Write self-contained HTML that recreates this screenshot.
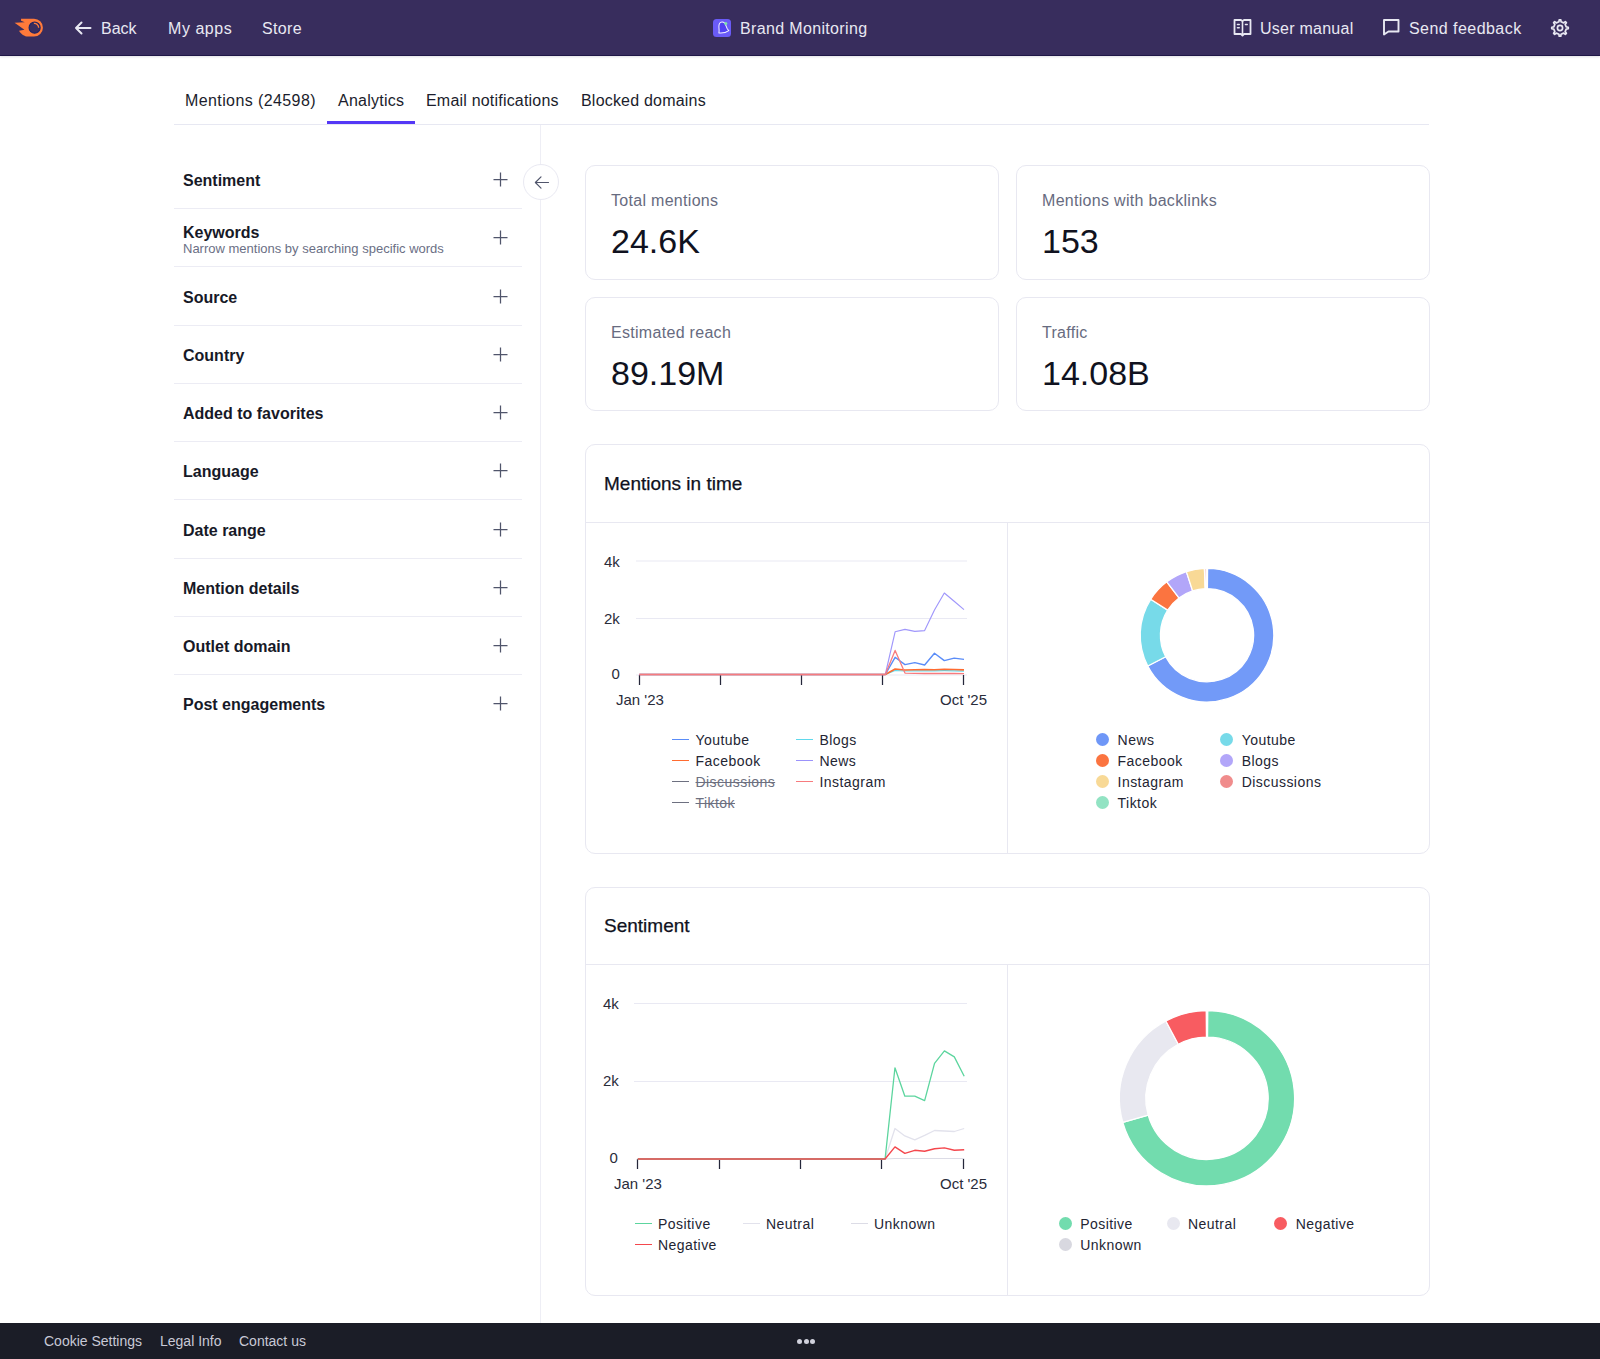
<!DOCTYPE html>
<html><head><meta charset="utf-8">
<style>
*{box-sizing:border-box;margin:0;padding:0}
html,body{width:1600px;height:1359px;overflow:hidden;background:#fff;font-family:"Liberation Sans",sans-serif;color:#171927}
.abs{position:absolute}
#hdr{position:absolute;left:0;top:0;width:1600px;height:56px;background:#382d5d;border-bottom:1px solid #1f1747;box-shadow:0 1px 2px rgba(40,40,70,0.14)}
.ht{position:absolute;top:19px;font-size:16px;line-height:19px;color:#e8e8f2;white-space:nowrap}
.tab{position:absolute;top:91px;font-size:16px;line-height:19px;color:#1b1d2c;white-space:nowrap}
.fi{position:absolute;left:174px;width:348px;height:58px;border-bottom:1px solid #ececf4}
.fi .t{position:absolute;left:9px;font-size:16px;font-weight:700;line-height:19px;color:#171927;white-space:nowrap}
.fi .s{position:absolute;left:9px;top:32px;font-size:13px;line-height:15px;color:#6b6f85;white-space:nowrap}
.plus{position:absolute;left:319px;top:21px;width:15px;height:15px}
.card{position:absolute;border:1px solid #e8e8f1;border-radius:10px;background:#fff}
.ml{position:absolute;left:25px;top:25px;font-size:16px;line-height:19px;color:#676b80;white-space:nowrap;letter-spacing:0.3px}
.mv{position:absolute;left:25px;top:56px;font-size:34px;line-height:38px;color:#101220;white-space:nowrap}
.ch{position:absolute;left:18px;top:28px;font-size:19px;line-height:22px;color:#0f1120;white-space:nowrap;-webkit-text-stroke:0.25px #0f1120}
.lg{position:absolute;font-size:14px;line-height:17px;color:#232533;white-space:nowrap;letter-spacing:0.45px}
.foot{position:absolute;top:1333px;font-size:14px;line-height:16px;color:#c8c9d6;white-space:nowrap}
</style></head><body>

<!-- HEADER -->
<div id="hdr">
  <svg class="abs" style="left:12px;top:16px" width="34" height="24" viewBox="12.8 16.6 32 22.6">
    <path d="M21.3 19.2 L33.5 19.2 A8.4 8.4 0 0 1 33.5 36 L28 36 C24.5 36 21.2 33.6 19.4 30.5 L24.5 29.6 L15.2 23 L24.8 22.4 L21.3 21.1 Z" fill="#ff7a3a"/>
    <circle cx="34.1" cy="27.6" r="5.2" fill="#392d5e" stroke="#1f2466" stroke-width="1.1"/>
    <path d="M33.4 23.6 A4 4 0 0 1 37.9 27.6" fill="none" stroke="#ff7a3a" stroke-width="1.3"/>
  </svg>
  <svg class="abs" style="left:73px;top:20px" width="19" height="16" viewBox="0 0 19 16">
    <path d="M17.5 8 H3 M8.5 2.5 L3 8 L8.5 13.5" fill="none" stroke="#e8e8f2" stroke-width="2" stroke-linecap="round" stroke-linejoin="round"/>
  </svg>
  <div class="ht" style="left:101px">Back</div>
  <div class="ht" style="left:168px;letter-spacing:0.55px">My apps</div>
  <div class="ht" style="left:262px;letter-spacing:0.35px">Store</div>

  <svg class="abs" style="left:713px;top:19px" width="18" height="18" viewBox="0 0 18 18">
    <rect x="0" y="0" width="18" height="18" rx="3.5" fill="#6a5bf6"/>
    <path transform="translate(0.2,-0.9) rotate(-8 9.5 9.5) translate(9.5 9.5) scale(0.92) translate(-9.5 -9.5)" d="M4.6 14.6 C5.6 12.8 5.2 9.8 5.6 7.6 C6 4.8 7.8 3.2 9.6 3.3 C11.4 3.4 12.8 5.2 13.3 7.8 C13.7 10.2 13.9 12.4 15.6 13.6 C12.5 15.2 8.5 15.6 4.6 14.6 Z" fill="#5140f2" stroke="#f4f4ff" stroke-width="1.1" stroke-linejoin="round"/>
    <circle cx="12.8" cy="4.6" r="1.5" fill="#7be3a8"/>
  </svg>
  <div class="ht" style="left:740px;letter-spacing:0.35px">Brand Monitoring</div>

  <svg class="abs" style="left:1233px;top:18px" width="20" height="20" viewBox="0 0 20 20">
    <path d="M1.5 2 H8 L9.5 3 L11 2 H17.5 V16 H11 L9.5 17.5 L8 16 H1.5 Z" fill="none" stroke="#e8e8f2" stroke-width="1.8" stroke-linejoin="round"/>
    <path d="M9.5 3 V16" stroke="#e8e8f2" stroke-width="1.6"/>
    <path d="M4.5 6.5 H6.2 M4.5 9.8 H6.2 M12.5 6.5 H14.2" stroke="#e8e8f2" stroke-width="1.6" stroke-linecap="round"/>
  </svg>
  <div class="ht" style="left:1260px;letter-spacing:0.25px">User manual</div>

  <svg class="abs" style="left:1382px;top:18px" width="19" height="19" viewBox="0 0 19 19">
    <path d="M2 2 H16.5 V13.5 H6.5 L2 16.5 Z" fill="none" stroke="#e8e8f2" stroke-width="1.9" stroke-linejoin="round"/>
  </svg>
  <div class="ht" style="left:1409px;letter-spacing:0.45px">Send feedback</div>

  <svg class="abs" style="left:1550px;top:18px" width="20" height="20" viewBox="0 0 20 20">
    <path d="M8.92 3.79 L9.22 1.74 L10.78 1.74 L11.08 3.79 L13.62 4.85 L15.29 3.60 L16.40 4.71 L15.15 6.38 L16.21 8.92 L18.26 9.22 L18.26 10.78 L16.21 11.08 L15.15 13.62 L16.40 15.29 L15.29 16.40 L13.62 15.15 L11.08 16.21 L10.78 18.26 L9.22 18.26 L8.92 16.21 L6.38 15.15 L4.71 16.40 L3.60 15.29 L4.85 13.62 L3.79 11.08 L1.74 10.78 L1.74 9.22 L3.79 8.92 L4.85 6.38 L3.60 4.71 L4.71 3.60 L6.38 4.85 Z" fill="none" stroke="#e8e8f2" stroke-width="1.7" stroke-linejoin="round"/>
    <circle cx="10" cy="10" r="2.6" fill="none" stroke="#e8e8f2" stroke-width="1.7"/>
  </svg>
</div>

<!-- TABS -->
<div class="abs" style="left:174px;top:124px;width:1255px;height:1px;background:#e7e8f2"></div>
<div class="abs" style="left:327px;top:121px;width:88px;height:3px;background:#5438f6"></div>
<div class="tab" style="left:185px;letter-spacing:0.4px">Mentions (24598)</div>
<div class="tab" style="left:338px;letter-spacing:0.25px">Analytics</div>
<div class="tab" style="left:426px;letter-spacing:0.2px">Email notifications</div>
<div class="tab" style="left:581px;letter-spacing:0.2px">Blocked domains</div>

<!-- SIDEBAR LINE -->
<div class="abs" style="left:540px;top:125px;width:1px;height:1198px;background:#eeeef5"></div>

<!-- FILTERS -->
<div class="fi" style="top:151px"><div class="t" style="top:20px">Sentiment</div><svg class="plus" width="15" height="15" viewBox="0 0 15 15"><path d="M0.5 7.5 H14.5 M7.5 0.5 V14.5" stroke="#50556b" stroke-width="1.25"/></svg></div>
<div class="fi" style="top:209px"><div class="t" style="top:13.5px">Keywords</div><div class="s" style="top:32px">Narrow mentions by searching specific words</div><svg class="plus" width="15" height="15" viewBox="0 0 15 15"><path d="M0.5 7.5 H14.5 M7.5 0.5 V14.5" stroke="#50556b" stroke-width="1.25"/></svg></div>
<div class="fi" style="top:268px"><div class="t" style="top:20px">Source</div><svg class="plus" width="15" height="15" viewBox="0 0 15 15"><path d="M0.5 7.5 H14.5 M7.5 0.5 V14.5" stroke="#50556b" stroke-width="1.25"/></svg></div>
<div class="fi" style="top:326px"><div class="t" style="top:20px">Country</div><svg class="plus" width="15" height="15" viewBox="0 0 15 15"><path d="M0.5 7.5 H14.5 M7.5 0.5 V14.5" stroke="#50556b" stroke-width="1.25"/></svg></div>
<div class="fi" style="top:384px"><div class="t" style="top:20px">Added to favorites</div><svg class="plus" width="15" height="15" viewBox="0 0 15 15"><path d="M0.5 7.5 H14.5 M7.5 0.5 V14.5" stroke="#50556b" stroke-width="1.25"/></svg></div>
<div class="fi" style="top:442px"><div class="t" style="top:20px">Language</div><svg class="plus" width="15" height="15" viewBox="0 0 15 15"><path d="M0.5 7.5 H14.5 M7.5 0.5 V14.5" stroke="#50556b" stroke-width="1.25"/></svg></div>
<div class="fi" style="top:501px"><div class="t" style="top:20px">Date range</div><svg class="plus" width="15" height="15" viewBox="0 0 15 15"><path d="M0.5 7.5 H14.5 M7.5 0.5 V14.5" stroke="#50556b" stroke-width="1.25"/></svg></div>
<div class="fi" style="top:559px"><div class="t" style="top:20px">Mention details</div><svg class="plus" width="15" height="15" viewBox="0 0 15 15"><path d="M0.5 7.5 H14.5 M7.5 0.5 V14.5" stroke="#50556b" stroke-width="1.25"/></svg></div>
<div class="fi" style="top:617px"><div class="t" style="top:20px">Outlet domain</div><svg class="plus" width="15" height="15" viewBox="0 0 15 15"><path d="M0.5 7.5 H14.5 M7.5 0.5 V14.5" stroke="#50556b" stroke-width="1.25"/></svg></div>
<div class="fi" style="top:675px;border-bottom:none"><div class="t" style="top:20px">Post engagements</div><svg class="plus" width="15" height="15" viewBox="0 0 15 15"><path d="M0.5 7.5 H14.5 M7.5 0.5 V14.5" stroke="#50556b" stroke-width="1.25"/></svg></div>

<!-- collapse button -->
<div class="abs" style="left:523px;top:164px;width:36px;height:36px;border-radius:50%;border:1px solid #e9e9f2;background:#fff"></div>
<svg class="abs" style="left:533px;top:174px" width="18" height="16" viewBox="0 0 18 16">
  <path d="M15.5 8.5 H2.5 M8 2.9 L2.4 8.5 L8 14.1" fill="none" stroke="#50556b" stroke-width="1.2" stroke-linecap="round" stroke-linejoin="round"/>
</svg>

<!-- METRIC CARDS -->
<div class="card" style="left:585px;top:165px;width:414px;height:115px"><div class="ml">Total mentions</div><div class="mv">24.6K</div></div>
<div class="card" style="left:1016px;top:165px;width:414px;height:115px"><div class="ml">Mentions with backlinks</div><div class="mv">153</div></div>
<div class="card" style="left:585px;top:297px;width:414px;height:114px"><div class="ml">Estimated reach</div><div class="mv">89.19M</div></div>
<div class="card" style="left:1016px;top:297px;width:414px;height:114px"><div class="ml">Traffic</div><div class="mv">14.08B</div></div>

<!-- CHART CARD 1 -->
<div class="card" style="left:585px;top:444px;width:845px;height:410px">
  <div class="ch">Mentions in time</div>
  <div class="abs" style="left:0;top:77px;width:843px;height:1px;background:#e8e8f1"></div>
  <div class="abs" style="left:421px;top:78px;width:1px;height:330px;background:#e8e8f1"></div>
</div>

<!-- CHART CARD 2 -->
<div class="card" style="left:585px;top:887px;width:845px;height:409px">
  <div class="ch" style="top:27px">Sentiment</div>
  <div class="abs" style="left:0;top:76px;width:843px;height:1px;background:#e8e8f1"></div>
  <div class="abs" style="left:421px;top:77px;width:1px;height:330px;background:#e8e8f1"></div>
</div>

<svg class="abs" style="left:0;top:0" width="1600" height="1359" viewBox="0 0 1600 1359">
<g stroke="#e9e9f3" stroke-width="1.2"><line x1="636" y1="561" x2="967" y2="561"/><line x1="636" y1="618.5" x2="967" y2="618.5"/><line x1="636" y1="675" x2="967" y2="675"/></g>
<g stroke="#25273a" stroke-width="1.25"><line x1="639.5" y1="675" x2="639.5" y2="685"/><line x1="720.5" y1="675" x2="720.5" y2="685"/><line x1="801.5" y1="675" x2="801.5" y2="685"/><line x1="882.5" y1="675" x2="882.5" y2="685"/><line x1="963.5" y1="675" x2="963.5" y2="685"/></g>
<polyline points="639.30,674.50 649.14,674.50 658.98,674.50 668.82,674.50 678.66,674.50 688.50,674.50 698.34,674.50 708.18,674.50 718.02,674.50 727.85,674.50 737.69,674.50 747.53,674.50 757.37,674.50 767.21,674.50 777.05,674.50 786.89,674.50 796.73,674.50 806.57,674.50 816.41,674.50 826.25,674.50 836.09,674.50 845.93,674.50 855.77,674.50 865.61,674.50 875.45,674.50 885.28,674.50 895.12,670.50 904.96,671.00 914.80,670.80 924.64,670.90 934.48,670.80 944.32,670.70 954.16,670.80 964.00,671.20" fill="none" stroke="#5fd9ec" stroke-width="1.2" stroke-linejoin="round"/>
<polyline points="639.30,674.50 649.14,674.50 658.98,674.50 668.82,674.50 678.66,674.50 688.50,674.50 698.34,674.50 708.18,674.50 718.02,674.50 727.85,674.50 737.69,674.50 747.53,674.50 757.37,674.50 767.21,674.50 777.05,674.50 786.89,674.50 796.73,674.50 806.57,674.50 816.41,674.50 826.25,674.50 836.09,674.50 845.93,674.50 855.77,674.50 865.61,674.50 875.45,674.50 885.28,674.50 895.12,669.00 904.96,670.00 914.80,669.70 924.64,669.60 934.48,669.70 944.32,669.30 954.16,669.50 964.00,669.90" fill="none" stroke="#ff6b30" stroke-width="1.6" stroke-linejoin="round"/>
<polyline points="639.30,674.50 649.14,674.50 658.98,674.50 668.82,674.50 678.66,674.50 688.50,674.50 698.34,674.50 708.18,674.50 718.02,674.50 727.85,674.50 737.69,674.50 747.53,674.50 757.37,674.50 767.21,674.50 777.05,674.50 786.89,674.50 796.73,674.50 806.57,674.50 816.41,674.50 826.25,674.50 836.09,674.50 845.93,674.50 855.77,674.50 865.61,674.50 875.45,674.50 885.28,674.50 895.12,657.30 904.96,664.60 914.80,662.60 924.64,665.00 934.48,653.30 944.32,660.60 954.16,658.10 964.00,659.40" fill="none" stroke="#5a8cf8" stroke-width="1.4" stroke-linejoin="round"/>
<polyline points="639.30,674.50 649.14,674.50 658.98,674.50 668.82,674.50 678.66,674.50 688.50,674.50 698.34,674.50 708.18,674.50 718.02,674.50 727.85,674.50 737.69,674.50 747.53,674.50 757.37,674.50 767.21,674.50 777.05,674.50 786.89,674.50 796.73,674.50 806.57,674.50 816.41,674.50 826.25,674.50 836.09,674.50 845.93,674.50 855.77,674.50 865.61,674.50 875.45,674.50 885.28,674.50 895.12,631.80 904.96,629.40 914.80,631.40 924.64,630.60 934.48,610.00 944.32,593.00 954.16,601.30 964.00,609.60" fill="none" stroke="#a097fb" stroke-width="1.15" stroke-linejoin="round"/>
<polyline points="639.30,674.50 649.14,674.50 658.98,674.50 668.82,674.50 678.66,674.50 688.50,674.50 698.34,674.50 708.18,674.50 718.02,674.50 727.85,674.50 737.69,674.50 747.53,674.50 757.37,674.50 767.21,674.50 777.05,674.50 786.89,674.50 796.73,674.50 806.57,674.50 816.41,674.50 826.25,674.50 836.09,674.50 845.93,674.50 855.77,674.50 865.61,674.50 875.45,674.50 885.28,674.50 895.12,650.40 904.96,673.10 914.80,673.40 924.64,673.50 934.48,673.50 944.32,673.50 954.16,673.50 964.00,673.60" fill="none" stroke="#f77b7e" stroke-width="1.3" stroke-linejoin="round"/>
<g stroke="#e9e9f3" stroke-width="1.2"><line x1="634" y1="1003.5" x2="967" y2="1003.5"/><line x1="634" y1="1081.5" x2="967" y2="1081.5"/></g>
<g stroke="#25273a" stroke-width="1.25"><line x1="637.5" y1="1159" x2="637.5" y2="1169"/><line x1="719.5" y1="1159" x2="719.5" y2="1169"/><line x1="800.5" y1="1159" x2="800.5" y2="1169"/><line x1="881.5" y1="1159" x2="881.5" y2="1169"/><line x1="963.5" y1="1159" x2="963.5" y2="1169"/></g>
<polyline points="637.80,1159.00 647.69,1159.00 657.58,1159.00 667.47,1159.00 677.36,1159.00 687.25,1159.00 697.15,1159.00 707.04,1159.00 716.93,1159.00 726.82,1159.00 736.71,1159.00 746.60,1159.00 756.49,1159.00 766.38,1159.00 776.27,1159.00 786.16,1159.00 796.05,1159.00 805.95,1159.00 815.84,1159.00 825.73,1159.00 835.62,1159.00 845.51,1159.00 855.40,1159.00 865.29,1159.00 875.18,1159.00 885.07,1159.00 894.96,1158.50 904.85,1158.50 914.75,1158.50 924.64,1158.50 934.53,1158.50 944.42,1158.50 954.31,1158.50 964.20,1158.50" fill="none" stroke="#dcdce6" stroke-width="1.2" stroke-linejoin="round"/>
<polyline points="637.80,1159.00 647.69,1159.00 657.58,1159.00 667.47,1159.00 677.36,1159.00 687.25,1159.00 697.15,1159.00 707.04,1159.00 716.93,1159.00 726.82,1159.00 736.71,1159.00 746.60,1159.00 756.49,1159.00 766.38,1159.00 776.27,1159.00 786.16,1159.00 796.05,1159.00 805.95,1159.00 815.84,1159.00 825.73,1159.00 835.62,1159.00 845.51,1159.00 855.40,1159.00 865.29,1159.00 875.18,1159.00 885.07,1159.00 894.96,1128.50 904.85,1135.90 914.75,1139.90 924.64,1135.40 934.53,1130.50 944.42,1131.00 954.31,1131.50 964.20,1128.50" fill="none" stroke="#e2e2ec" stroke-width="1.3" stroke-linejoin="round"/>
<polyline points="637.80,1159.00 647.69,1159.00 657.58,1159.00 667.47,1159.00 677.36,1159.00 687.25,1159.00 697.15,1159.00 707.04,1159.00 716.93,1159.00 726.82,1159.00 736.71,1159.00 746.60,1159.00 756.49,1159.00 766.38,1159.00 776.27,1159.00 786.16,1159.00 796.05,1159.00 805.95,1159.00 815.84,1159.00 825.73,1159.00 835.62,1159.00 845.51,1159.00 855.40,1159.00 865.29,1159.00 875.18,1159.00 885.07,1159.00 894.96,1067.80 904.85,1096.20 914.75,1096.20 924.64,1100.60 934.53,1063.40 944.42,1050.90 954.31,1056.90 964.20,1076.30" fill="none" stroke="#5cd59e" stroke-width="1.3" stroke-linejoin="round"/>
<polyline points="637.80,1159.00 647.69,1159.00 657.58,1159.00 667.47,1159.00 677.36,1159.00 687.25,1159.00 697.15,1159.00 707.04,1159.00 716.93,1159.00 726.82,1159.00 736.71,1159.00 746.60,1159.00 756.49,1159.00 766.38,1159.00 776.27,1159.00 786.16,1159.00 796.05,1159.00 805.95,1159.00 815.84,1159.00 825.73,1159.00 835.62,1159.00 845.51,1159.00 855.40,1159.00 865.29,1159.00 875.18,1159.00 885.07,1159.00 894.96,1146.90 904.85,1153.30 914.75,1150.30 924.64,1151.30 934.53,1148.80 944.42,1147.90 954.31,1150.30 964.20,1149.80" fill="none" stroke="#f4474d" stroke-width="1.4" stroke-linejoin="round"/>
<g stroke="#fff" stroke-width="1.3" stroke-linejoin="round">
<path d="M1207.58 568.40 A66.8 66.8 0 1 1 1147.75 666.04 L1165.67 656.72 A46.6 46.6 0 1 0 1207.41 588.60 Z" fill="#729af8"/>
<path d="M1147.75 666.04 A66.8 66.8 0 0 1 1150.66 599.31 L1167.70 610.16 A46.6 46.6 0 0 0 1165.67 656.72 Z" fill="#77dae9"/>
<path d="M1150.66 599.31 A66.8 66.8 0 0 1 1166.80 581.85 L1178.96 597.98 A46.6 46.6 0 0 0 1167.70 610.16 Z" fill="#fb7440"/>
<path d="M1166.80 581.85 A66.8 66.8 0 0 1 1186.36 571.67 L1192.60 590.88 A46.6 46.6 0 0 0 1178.96 597.98 Z" fill="#b2a6f9"/>
<path d="M1186.36 571.67 A66.8 66.8 0 0 1 1204.44 568.45 L1205.21 588.63 A46.6 46.6 0 0 0 1192.60 590.88 Z" fill="#f8d996"/>
<path d="M1204.44 568.45 A66.8 66.8 0 0 1 1206.07 568.41 L1206.35 588.60 A46.6 46.6 0 0 0 1205.21 588.63 Z" fill="#f08c8c"/>
<path d="M1207.76 1010.70 A87.6 87.6 0 1 1 1122.79 1122.45 L1148.17 1115.17 A61.2 61.2 0 1 0 1207.53 1037.10 Z" fill="#72dcae"/>
<path d="M1122.79 1122.45 A87.6 87.6 0 0 1 1165.87 1020.95 L1178.27 1044.26 A61.2 61.2 0 0 0 1148.17 1115.17 Z" fill="#e8e8f0"/>
<path d="M1165.87 1020.95 A87.6 87.6 0 0 1 1206.24 1010.70 L1206.47 1037.10 A61.2 61.2 0 0 0 1178.27 1044.26 Z" fill="#f85c61"/>
</g>
</svg>
<div class="abs" style="left:604px;top:552.7px;font-size:15px;line-height:17px;color:#2a2c3a;white-space:nowrap;">4k</div>
<div class="abs" style="left:604px;top:609.5px;font-size:15px;line-height:17px;color:#2a2c3a;white-space:nowrap;">2k</div>
<div class="abs" style="left:611.5px;top:665px;font-size:15px;line-height:17px;color:#2a2c3a;white-space:nowrap;">0</div>
<div class="abs" style="left:616px;top:691px;font-size:15px;line-height:17px;color:#2a2c3a;white-space:nowrap;">Jan &#39;23</div>
<div class="abs" style="left:940px;top:691px;font-size:15px;line-height:17px;color:#2a2c3a;white-space:nowrap;">Oct &#39;25</div>
<div class="abs" style="left:603px;top:994.5px;font-size:15px;line-height:17px;color:#2a2c3a;white-space:nowrap;">4k</div>
<div class="abs" style="left:603px;top:1071.5px;font-size:15px;line-height:17px;color:#2a2c3a;white-space:nowrap;">2k</div>
<div class="abs" style="left:609.5px;top:1149px;font-size:15px;line-height:17px;color:#2a2c3a;white-space:nowrap;">0</div>
<div class="abs" style="left:614px;top:1175px;font-size:15px;line-height:17px;color:#2a2c3a;white-space:nowrap;">Jan &#39;23</div>
<div class="abs" style="left:940px;top:1175px;font-size:15px;line-height:17px;color:#2a2c3a;white-space:nowrap;">Oct &#39;25</div>
<div class="abs" style="left:672px;top:738.75px;width:17px;height:1.5px;background:#5a8cf8"></div>
<div class="lg" style="left:695.5px;top:731.5px;">Youtube</div>
<div class="abs" style="left:796px;top:738.75px;width:17px;height:1.5px;background:#5fd9ec"></div>
<div class="lg" style="left:819.5px;top:731.5px;">Blogs</div>
<div class="abs" style="left:672px;top:759.75px;width:17px;height:1.5px;background:#ff6b30"></div>
<div class="lg" style="left:695.5px;top:752.5px;">Facebook</div>
<div class="abs" style="left:796px;top:759.75px;width:17px;height:1.5px;background:#9b92fb"></div>
<div class="lg" style="left:819.5px;top:752.5px;">News</div>
<div class="abs" style="left:672px;top:780.75px;width:17px;height:1.5px;background:#6d7080"></div>
<div class="lg" style="left:695.5px;top:773.5px;text-decoration:line-through;color:#6d7080;">Discussions</div>
<div class="abs" style="left:796px;top:780.75px;width:17px;height:1.5px;background:#f77b7e"></div>
<div class="lg" style="left:819.5px;top:773.5px;">Instagram</div>
<div class="abs" style="left:672px;top:801.75px;width:17px;height:1.5px;background:#6d7080"></div>
<div class="lg" style="left:695.5px;top:794.5px;text-decoration:line-through;color:#6d7080;">Tiktok</div>
<div class="abs" style="left:1096.1px;top:733.0px;width:13px;height:13px;border-radius:50%;background:#6f97f7"></div>
<div class="lg" style="left:1117.6px;top:732.0px">News</div>
<div class="abs" style="left:1220.2px;top:733.0px;width:13px;height:13px;border-radius:50%;background:#77dae9"></div>
<div class="lg" style="left:1241.7px;top:732.0px">Youtube</div>
<div class="abs" style="left:1096.1px;top:754.0px;width:13px;height:13px;border-radius:50%;background:#fb7440"></div>
<div class="lg" style="left:1117.6px;top:753.0px">Facebook</div>
<div class="abs" style="left:1220.2px;top:754.0px;width:13px;height:13px;border-radius:50%;background:#b2a6f9"></div>
<div class="lg" style="left:1241.7px;top:753.0px">Blogs</div>
<div class="abs" style="left:1096.1px;top:775.0px;width:13px;height:13px;border-radius:50%;background:#f8d996"></div>
<div class="lg" style="left:1117.6px;top:774.0px">Instagram</div>
<div class="abs" style="left:1220.2px;top:775.0px;width:13px;height:13px;border-radius:50%;background:#f08c8c"></div>
<div class="lg" style="left:1241.7px;top:774.0px">Discussions</div>
<div class="abs" style="left:1096.1px;top:796.0px;width:13px;height:13px;border-radius:50%;background:#92e3c3"></div>
<div class="lg" style="left:1117.6px;top:795.0px">Tiktok</div>
<div class="abs" style="left:634.5px;top:1222.75px;width:17px;height:1.5px;background:#5cd59e"></div>
<div class="lg" style="left:658.0px;top:1215.5px;">Positive</div>
<div class="abs" style="left:742.5px;top:1222.75px;width:17px;height:1.5px;background:#e2e2ec"></div>
<div class="lg" style="left:766.0px;top:1215.5px;">Neutral</div>
<div class="abs" style="left:850.5px;top:1222.75px;width:17px;height:1.5px;background:#dcdce6"></div>
<div class="lg" style="left:874.0px;top:1215.5px;">Unknown</div>
<div class="abs" style="left:634.5px;top:1243.75px;width:17px;height:1.5px;background:#f4474d"></div>
<div class="lg" style="left:658.0px;top:1236.5px;">Negative</div>
<div class="abs" style="left:1058.7px;top:1217.0px;width:13px;height:13px;border-radius:50%;background:#72dcae"></div>
<div class="lg" style="left:1080.2px;top:1216.0px">Positive</div>
<div class="abs" style="left:1166.5px;top:1217.0px;width:13px;height:13px;border-radius:50%;background:#e8e8f0"></div>
<div class="lg" style="left:1188px;top:1216.0px">Neutral</div>
<div class="abs" style="left:1274.2px;top:1217.0px;width:13px;height:13px;border-radius:50%;background:#f85c61"></div>
<div class="lg" style="left:1295.7px;top:1216.0px">Negative</div>
<div class="abs" style="left:1058.7px;top:1238.0px;width:13px;height:13px;border-radius:50%;background:#d8d8e0"></div>
<div class="lg" style="left:1080.2px;top:1237.0px">Unknown</div>

<!-- FOOTER -->
<div class="abs" style="left:0;top:1323px;width:1600px;height:36px;background:#1b1d27"></div>
<div class="foot" style="left:44px">Cookie Settings</div>
<div class="foot" style="left:160px">Legal Info</div>
<div class="foot" style="left:239px">Contact us</div>
<div class="abs" style="left:797px;top:1339px;width:5px;height:5px;border-radius:50%;background:#d0d1dc"></div>
<div class="abs" style="left:803.5px;top:1339px;width:5px;height:5px;border-radius:50%;background:#d0d1dc"></div>
<div class="abs" style="left:810px;top:1339px;width:5px;height:5px;border-radius:50%;background:#d0d1dc"></div>

</body></html>
